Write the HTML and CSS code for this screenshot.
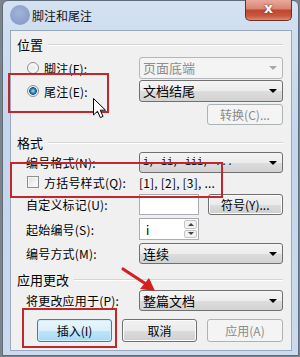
FILE: index.html
```html
<!DOCTYPE html>
<html>
<head>
<meta charset="utf-8">
<link rel="stylesheet" href="styles.css">
</head>
<body>
<div class="window">
  <div class="titlebar">
    <span class="app-icon"></span>
    <span class="title">脚注和尾注</span>
    <span class="close">x</span>
  </div>
  <div class="client">
    <div class="header"><span>位置</span><i class="rule"></i></div>
    <div class="row r1">
      <label class="lbl"><span class="radio"></span>脚注(F):</label>
      <div class="combo disabled"><span>页面底端</span><i class="caret"></i></div>
    </div>
    <div class="row r2">
      <label class="lbl"><span class="radio on"></span>尾注(E):</label>
      <div class="combo"><span>文档结尾</span><i class="caret"></i></div>
    </div>
    <div class="row r3 right">
      <div class="btn disabled small">转换(C)...</div>
    </div>

    <div class="header h2"><span>格式</span><i class="rule"></i></div>
    <div class="row r4">
      <label class="lbl">编号格式(N):</label>
      <div class="combo"><span class="fmt">i, ii, iii, ...</span><i class="caret"></i></div>
    </div>
    <div class="row r5">
      <label class="lbl"><span class="check"></span>方括号样式(Q):</label>
      <span class="plain">[1], [2], [3], ...</span>
    </div>
    <div class="row r6">
      <label class="lbl">自定义标记(U):</label>
      <div class="edit"></div>
      <div class="btn small sym">符号(Y)...</div>
    </div>
    <div class="row r7">
      <label class="lbl">起始编号(S):</label>
      <div class="edit spin"><span>i</span><div class="spinbtns"><i class="up"></i><i class="down"></i></div></div>
    </div>
    <div class="row r8">
      <label class="lbl">编号方式(M):</label>
      <div class="combo"><span>连续</span><i class="caret"></i></div>
    </div>

    <div class="header h3"><span>应用更改</span><i class="rule"></i></div>
    <div class="row r9">
      <label class="lbl">将更改应用于(P):</label>
      <div class="combo"><span>整篇文档</span><i class="caret"></i></div>
    </div>
    <div class="buttons">
      <div class="btn focus">插入(I)</div>
      <div class="btn">取消</div>
      <div class="btn disabled">应用(A)</div>
    </div>
  </div>
</div>

<div class="mark m1"></div>
<div class="mark m2"></div>
<div class="mark m3"></div>

<svg class="cursor" width="14" height="22" viewBox="0 0 14 22">
  <path d="M0.5,0.5 L0.5,17 L4.5,13.2 L7.3,19.6 L10,18.4 L7.3,12.2 L12.5,12.2 Z" fill="#fff" stroke="#000" stroke-width="1"/>
</svg>

<svg class="arrow" width="40" height="30" viewBox="0 0 40 30">
  <line x1="3" y1="3" x2="26" y2="18" stroke="#d42020" stroke-width="3.2" stroke-linecap="round"/>
  <polygon points="35,25 20,23 29,12" fill="#d42020"/>
</svg>
</body>
</html>
```

FILE: styles.css
```css
html, body {
  margin: 0;
  padding: 0;
}
body {
  width: 300px;
  height: 357px;
  overflow: hidden;
  background: #7d838b;
  position: relative;
  font-family: "Noto Sans CJK SC", "Liberation Sans", sans-serif;
  font-size: 12px;
  color: #000;
}
.window {
  margin-left: 2px;
  width: 297px;
  height: 356px;
  box-sizing: border-box;
  border: 1px solid #5f6c7b;
  border-radius: 6px 6px 0 0;
  background: linear-gradient(180deg, #d3e1f1 0%, #c4d6ec 40%, #cbdaee 100%);
  display: flex;
  flex-direction: column;
}
.titlebar {
  height: 29px;
  display: flex;
  align-items: flex-start;
  padding-left: 7px;
  padding-right: 6px;
}
.app-icon {
  width: 20px;
  height: 20px;
  margin-top: 4px;
  border-radius: 50%;
  background: radial-gradient(circle at 45% 40%, #a2b3d6 0%, #8b9ec9 70%, #7f93bf 100%);
}
.title {
  margin-left: 2px;
  margin-top: 6px;
  font-size: 12px;
  line-height: 17px;
  color: #111;
}
.close {
  margin-left: auto;
  margin-top: -1px;
  width: 47px;
  height: 21px;
  box-sizing: border-box;
  border: 1px solid #6e2d26;
  border-top: none;
  border-radius: 0 0 5px 5px;
  background: linear-gradient(180deg, #e9a99b 0%, #d88472 45%, #c0442f 50%, #c9583f 80%, #dc8a6d 100%);
  color: #fff;
  font-family: "DejaVu Sans", sans-serif;
  font-weight: bold;
  font-size: 14px;
  line-height: 17px;
  text-align: center;
  text-shadow: 0 0 2px #5a1a10;
}
.client {
  margin-left: 7px;
  width: 282px;
  height: 321px;
  box-sizing: border-box;
  border: 1px solid #98a9be;
  background: #f0f0f0;
  padding: 7px 8px 0 6px;
  display: flex;
  flex-direction: column;
}
.header {
  height: 14px;
  display: flex;
  align-items: center;
  font-size: 13px;
  line-height: 14px;
}
.header .rule {
  flex: 1;
  margin-left: 5px;
  height: 0;
  border-top: 1px solid #d5d5d5;
  border-bottom: 1px solid #fff;
}
.h2 { margin-top: 11px; }
.h3 { margin-top: 9px; }
.row {
  display: flex;
  align-items: center;
  padding-left: 9px;
}
.row.right { justify-content: flex-end; }
.r1 { margin-top: 5px; height: 22px; }
.r2 { margin-top: 1px; height: 22px; }
.r3 { margin-top: 2px; height: 21px; }
.r4 { margin-top: 2px; height: 21px; }
.r5 { height: 18px; }
.r6 { margin-top: 3px; height: 21px; }
.r7 { margin-top: 3px; height: 22px; }
.r8 { margin-top: 3px; height: 21px; }
.r9 { margin-top: 3px; height: 21px; }
.lbl {
  width: 113px;
  flex: none;
  display: flex;
  align-items: center;
  white-space: nowrap;
  font-size: 12px;
  letter-spacing: 0.2px;
}
.radio {
  width: 12px;
  height: 12px;
  box-sizing: border-box;
  margin-left: 1px;
  margin-right: 5px;
  border-radius: 50%;
  border: 1px solid #8e8f8f;
  background: radial-gradient(circle, #e9e9e9 0%, #f7f7f7 60%, #ffffff 100%);
}
.radio.on {
  background: radial-gradient(circle, #aee0fb 0%, #2f78b0 35%, #1a5a8f 50%, #e4eef6 58%, #ffffff 100%);
}
.check {
  width: 12px;
  height: 12px;
  box-sizing: border-box;
  margin-left: 1px;
  margin-right: 5px;
  border: 1px solid #8e8f8f;
  background: linear-gradient(135deg, #dcdcdc 0%, #f2f2f2 60%, #ffffff 100%);
  box-shadow: inset 0 0 0 1px #f4f4f4;
}
.combo {
  width: 144px;
  height: 100%;
  box-sizing: border-box;
  border: 1px solid #707070;
  border-radius: 3px;
  background: linear-gradient(180deg, #f5f5f5 0%, #ececec 50%, #dddddd 51%, #d2d2d2 100%);
  display: flex;
  align-items: center;
  padding-left: 3px;
  padding-right: 5px;
  font-size: 13px;
}
.combo span { flex: 1; white-space: nowrap; line-height: 16px; }
.combo .fmt {
  font-family: "Liberation Mono", monospace;
  font-size: 10px;
  overflow: hidden;
}
.caret {
  width: 0;
  height: 0;
  border-left: 4px solid transparent;
  border-right: 4px solid transparent;
  border-top: 4px solid #000;
}
.combo.disabled {
  border-color: #b3b7ba;
  background: #f4f4f4;
  color: #8d8d8d;
}
.combo.disabled .caret { border-top-color: #a9a9a9; }
.plain {
  font-size: 12px;
  letter-spacing: 0.2px;
  white-space: nowrap;
}
.edit {
  width: 60px;
  height: 100%;
  box-sizing: border-box;
  border: 1px solid #abadb3;
  border-top-color: #a6a9ad;
  background: #fff;
}
.spin {
  display: flex;
  align-items: center;
  padding-left: 6px;
  font-size: 12px;
}
.spin span { flex: 1; }
.spinbtns {
  width: 13px;
  height: 18px;
  margin-right: 1px;
  display: flex;
  flex-direction: column;
  gap: 1px;
}
.spinbtns i {
  flex: 1;
  box-sizing: border-box;
  border: 1px solid #c5c5c5;
  border-radius: 2px;
  background: #f2f2f2;
  display: flex;
  align-items: center;
  justify-content: center;
}
.spinbtns .up::after {
  content: "";
  border-left: 3px solid transparent;
  border-right: 3px solid transparent;
  border-bottom: 3px solid #444;
}
.spinbtns .down::after {
  content: "";
  border-left: 3px solid transparent;
  border-right: 3px solid transparent;
  border-top: 3px solid #444;
}
.sym { margin-left: 9px; }
.btn {
  width: 75px;
  height: 100%;
  box-sizing: border-box;
  border: 1px solid #707070;
  border-radius: 3px;
  background: linear-gradient(180deg, #f2f2f2 0%, #ebebeb 50%, #dddddd 51%, #cfcfcf 100%);
  box-shadow: inset 0 0 0 1px #fcfcfc;
  display: flex;
  align-items: center;
  justify-content: center;
  font-size: 12px;
  white-space: nowrap;
}
.btn.small { width: 76px; }
.btn.disabled {
  border-color: #adb2b5;
  background: #f4f4f4;
  box-shadow: none;
  color: #8a8a8a;
}
.btn.focus {
  border-color: #3c7fb1;
  background: linear-gradient(180deg, #eaf6fd 0%, #d9f0fc 50%, #bee6fd 51%, #a7d9f5 100%);
  box-shadow: inset 0 0 0 1px #d4ecf9;
}
.buttons {
  margin-top: 8px;
  height: 23px;
  display: flex;
  justify-content: flex-end;
  gap: 10px;
}
.buttons .btn:last-child { width: 76px; }
.mark {
  position: absolute;
  box-sizing: border-box;
  border: 2px solid #c1272d;
}
.m1 { left: 8px; top: 73px; width: 101px; height: 40px; }
.m2 { left: 10px; top: 162px; width: 213px; height: 36px; }
.m3 { left: 22px; top: 308px; width: 95px; height: 40px; }
.cursor {
  position: absolute;
  left: 93px;
  top: 98px;
}
.arrow {
  position: absolute;
  left: 120px;
  top: 266px;
}
```
